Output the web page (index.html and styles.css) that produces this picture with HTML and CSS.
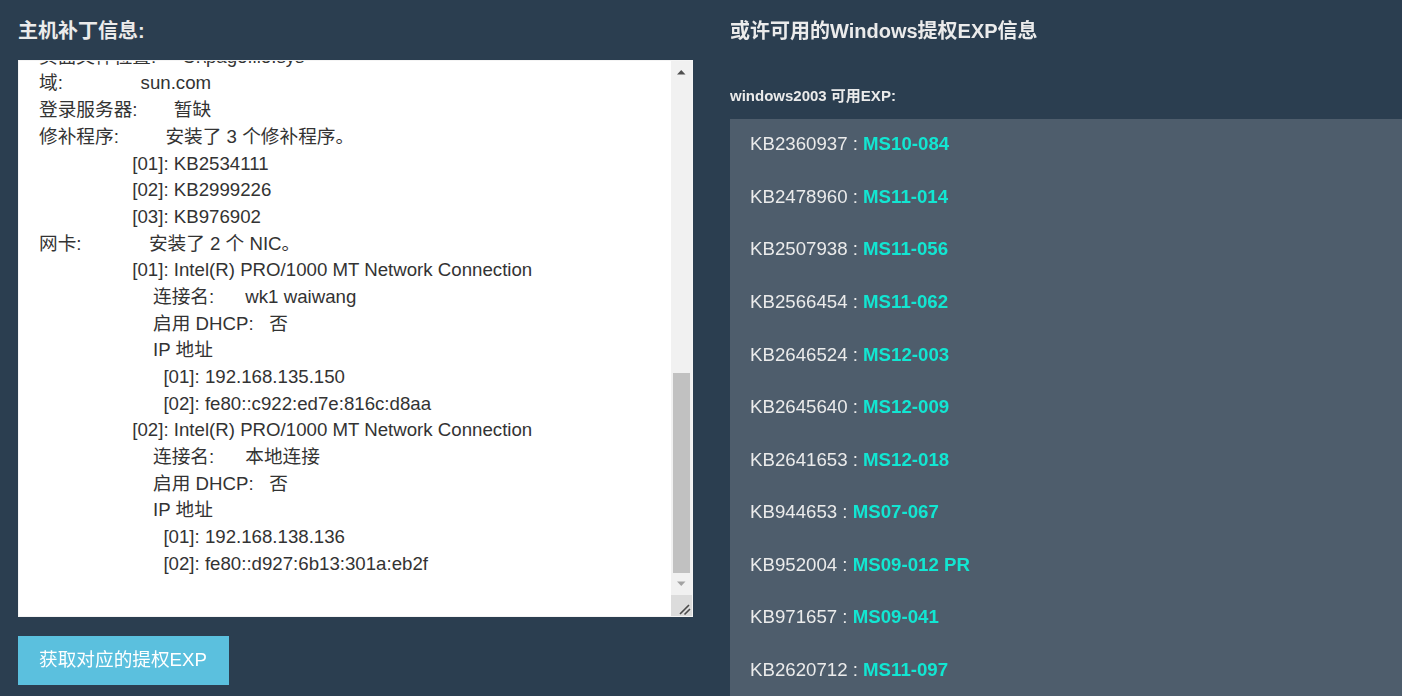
FILE: index.html
```html
<!DOCTYPE html>
<html lang="zh-CN">
<head>
<meta charset="utf-8">
<title>Windows提权EXP查询</title>
<link rel="stylesheet" href="styles.css">
</head>
<body>
<div class="page">
  <div class="col col-left">
    <h3 class="title">主机补丁信息:</h3>
    <div class="ta-box">
      <textarea class="info" id="info" spellcheck="false">主机名:           SUN-PC
OS 名称:          Microsoft Windows 7 旗舰版
OS 版本:          6.1.7601 Service Pack 1 Build 7601
OS 制造商:        Microsoft Corporation
OS 配置:          成员工作站
OS 构件类型:      Multiprocessor Free
注册的所有者:     Windows 用户
注册的组织:
产品 ID:          00426-OEM-8992662-00006
初始安装日期:     2017/1/14, 17:22:57
系统启动时间:     2017/3/2, 9:41:35
系统制造商:       VMware, Inc.
系统型号:         VMware Virtual Platform
系统类型:         x64-based PC
处理器:           安装了 1 个处理器。
                  [01]: Intel64 Family 6 Model 60 ~3392 Mhz
BIOS 版本:        Phoenix Technologies LTD 6.00, 2015/5/20
Windows 目录:     C:\Windows
系统目录:         C:\Windows\system32
启动设备:         \Device\HarddiskVolume1
系统区域设置:     zh-cn;中文(中国)
输入法区域设置:   zh-cn;中文(中国)
时区:             (UTC+08:00)北京，重庆，香港特别行政区
物理内存总量:     2,047 MB
可用的物理内存:   1,318 MB
虚拟内存: 最大值: 4,095 MB
虚拟内存: 可用:   3,256 MB
虚拟内存: 使用中: 839 MB
页面文件位置:     C:\pagefile.sys
域:               sun.com
登录服务器:       暂缺
修补程序:         安装了 3 个修补程序。
                  [01]: KB2534111
                  [02]: KB2999226
                  [03]: KB976902
网卡:             安装了 2 个 NIC。
                  [01]: Intel(R) PRO/1000 MT Network Connection
                      连接名:      wk1 waiwang
                      启用 DHCP:   否
                      IP 地址
                        [01]: 192.168.135.150
                        [02]: fe80::c922:ed7e:816c:d8aa
                  [02]: Intel(R) PRO/1000 MT Network Connection
                      连接名:      本地连接
                      启用 DHCP:   否
                      IP 地址
                        [01]: 192.168.138.136
                        [02]: fe80::d927:6b13:301a:eb2f


</textarea>
      <div class="vscroll" aria-hidden="true">
        <div class="sb-btn">
          <svg width="21" height="21" viewBox="0 0 21 21"><polygon points="6,13.5 14.5,13.5 10.25,9" fill="#505050"/></svg>
        </div>
        <div class="sb-track">
          <div class="sb-thumb"></div>
        </div>
        <div class="sb-btn">
          <svg width="21" height="21" viewBox="0 0 21 21"><polygon points="6,7.5 14.5,7.5 10.25,12" fill="#a3a3a3"/></svg>
        </div>
        <div class="sb-corner">
          <svg width="21" height="21" viewBox="0 0 21 21"><path d="M9 19 L18 10 M13.5 19.5 L19 14" stroke="#4a4a4a" stroke-width="1.6" fill="none"/></svg>
        </div>
      </div>
    </div>
    <button class="btn" type="button">获取对应的提权EXP</button>
  </div>
  <div class="col col-right">
    <h3 class="title">或许可用的Windows提权EXP信息</h3>
    <h5 class="sub">windows2003 可用EXP:</h5>
    <ul class="list">
      <li class="item">KB2360937 : <span class="exp">MS10-084</span></li>
      <li class="item">KB2478960 : <span class="exp">MS11-014</span></li>
      <li class="item">KB2507938 : <span class="exp">MS11-056</span></li>
      <li class="item">KB2566454 : <span class="exp">MS11-062</span></li>
      <li class="item">KB2646524 : <span class="exp">MS12-003</span></li>
      <li class="item">KB2645640 : <span class="exp">MS12-009</span></li>
      <li class="item">KB2641653 : <span class="exp">MS12-018</span></li>
      <li class="item">KB944653 : <span class="exp">MS07-067</span></li>
      <li class="item">KB952004 : <span class="exp">MS09-012 PR</span></li>
      <li class="item">KB971657 : <span class="exp">MS09-041</span></li>
      <li class="item">KB2620712 : <span class="exp">MS11-097</span></li>
    </ul>
  </div>
</div>
<script src="script.js"></script>
</body>
</html>
```

FILE: styles.css
```css
html, body {
  margin: 0;
  height: 100%;
  overflow: hidden;
  background: #2b3e50;
}

body {
  font-family: "Liberation Sans", "Noto Sans CJK SC", sans-serif;
  color: #ebebeb;
}

.page {
  display: grid;
  grid-template-columns: 675px 1fr;
  column-gap: 37px;
  padding-left: 18px;
}

.title {
  margin: 17px 0 0;
  font-size: 20px;
  line-height: 28px;
  font-weight: 700;
  color: #ebebeb;
}

.ta-box {
  display: flex;
  box-sizing: border-box;
  width: 675px;
  height: 557px;
  margin-top: 15px;
  border: 1px solid #f4f4f4;
  background: #fff;
}

.info {
  flex: 1;
  min-width: 0;
  display: block;
  box-sizing: border-box;
  height: 100%;
  margin: 0;
  padding: 6px 20px;
  border: none;
  border-radius: 0;
  background: #fff;
  color: #333;
  font-family: "Liberation Sans", "Noto Sans CJK SC", sans-serif;
  font-size: 18.67px;
  line-height: 26.67px;
  outline: none;
  resize: none;
  overflow-y: scroll;
  scrollbar-width: none;
}

.info::-webkit-scrollbar {
  display: none;
}

.vscroll {
  width: 21px;
  flex: none;
  display: flex;
  flex-direction: column;
  background: #f1f1f1;
}

.sb-btn {
  height: 21px;
  flex: none;
}

.sb-btn svg,
.sb-corner svg {
  display: block;
}

.sb-track {
  flex: 1;
  padding-top: 291px;
  box-sizing: border-box;
}

.sb-thumb {
  height: 200px;
  margin: 0 2px;
  background: #c1c1c1;
}

.sb-corner {
  height: 21px;
  flex: none;
  background: #dcdcdc;
}

.btn {
  display: block;
  margin-top: 19px;
  padding: 10px 20px 10px 20px;
  width: 211px;
  border: 1px solid #5bc0de;
  border-radius: 0;
  background: #5bc0de;
  color: #fff;
  font-family: "Liberation Sans", "Noto Sans CJK SC", sans-serif;
  font-size: 18.67px;
  line-height: 26.67px;
  text-align: left;
  cursor: pointer;
}

.sub {
  margin: 39.5px 0 0;
  font-size: 15px;
  line-height: 21px;
  font-weight: 700;
  color: #ebebeb;
}

.list {
  list-style: none;
  margin: 13.5px 0 0;
  padding: 0;
  background: #4e5d6c;
}

.item {
  padding: 12.3px 20px 13.6px;
  font-size: 18.67px;
  line-height: 26.67px;
  color: #ebebeb;
}

.exp {
  color: #12e6d2;
  font-weight: 700;
}
```

FILE: script.js
```js
(function () {
  var ta = document.getElementById('info');
  var lines = ta.value.split('\n');
  var k = 0;
  for (var i = 0; i < lines.length; i++) {
    if (lines[i].indexOf('域:') === 0) { k = i; break; }
  }
  var lineHeight = 26.67;
  var padTop = 6;
  ta.scrollTop = Math.round(padTop + k * lineHeight - 9.67);
})();
```
